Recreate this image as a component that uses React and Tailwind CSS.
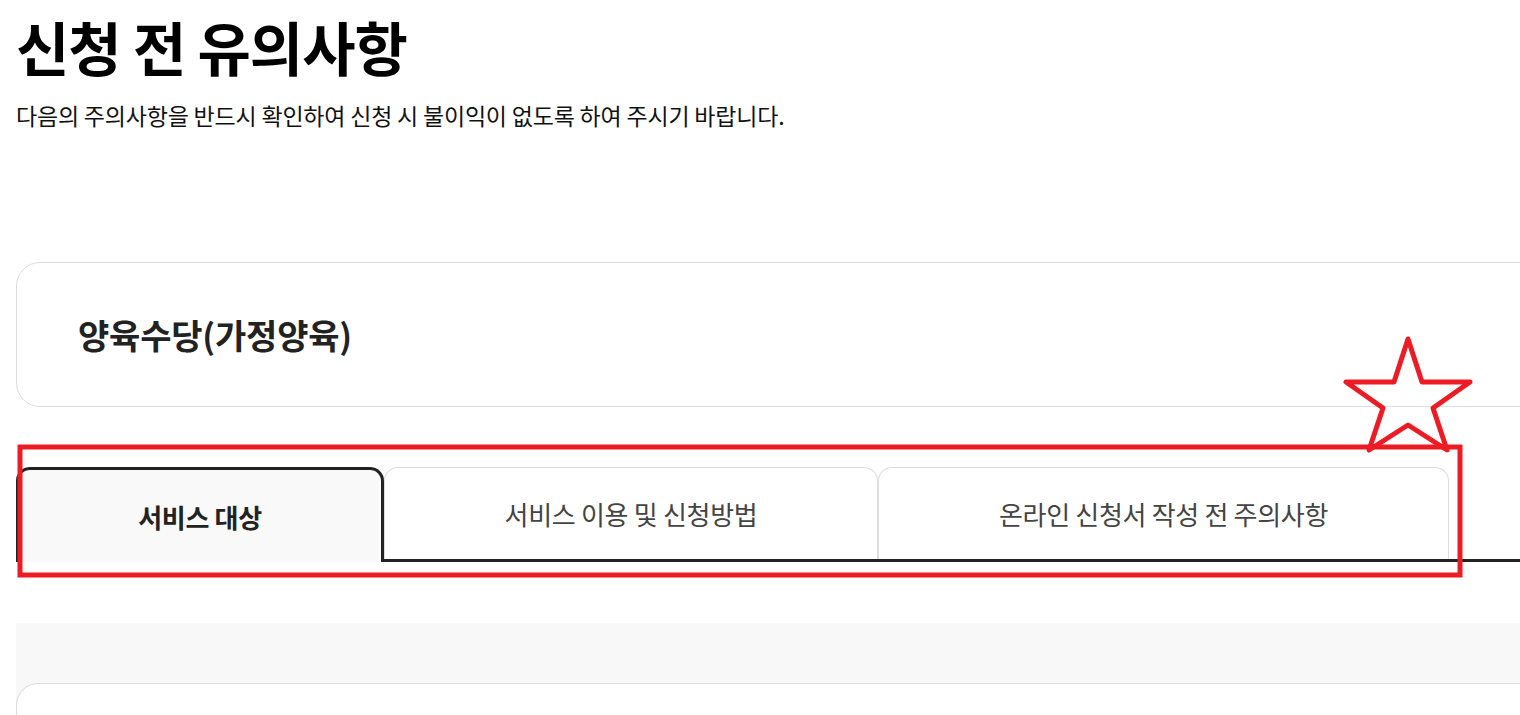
import React from 'react';

const tabs = [
  { label: '서비스 대상', width: 'w-[368px]', active: true },
  { label: '서비스 이용 및 신청방법', width: 'w-[494px]' },
  { label: '온라인 신청서 작성 전 주의사항', width: 'w-[571px]' },
];

function Tab({ label, width, active }) {
  if (active) {
    return (
      <button
        type="button"
        className={`${width} h-[95px] -mb-[3px] shrink-0 rounded-t-[14px] border-[3px] border-b-0 border-[#222] bg-[#f9f9f9] text-[26px] font-bold tracking-[-0.3px] text-[#222]`}
      >
        {label}
      </button>
    );
  }
  return (
    <button
      type="button"
      className={`${width} h-[92px] shrink-0 rounded-t-[14px] border border-b-0 border-[#dddddd] bg-white text-[26px] tracking-[-0.3px] text-[#444]`}
    >
      {label}
    </button>
  );
}

export default function App() {
  return (
    <div
      className="relative min-h-screen overflow-hidden bg-white text-[#111]"
      style={{ fontFamily: '"Noto Sans CJK KR", "Noto Sans", sans-serif' }}
    >
      <div className="w-[1640px] pl-[16px]">
        <h1 className="pt-[10px] text-[58px] font-bold leading-[72px] tracking-[-1px] text-black">
          신청 전 유의사항
        </h1>
        <p className="mt-[17px] text-[23px] leading-[32px] tracking-[-0.2px] text-[#111]">
          다음의 주의사항을 반드시 확인하여 신청 시 불이익이 없도록 하여 주시기 바랍니다.
        </p>

        <section className="mt-[131px] flex h-[145px] items-center rounded-[24px] border border-[#dddddd] pl-[61px]">
          <h2 className="text-[34px] font-bold tracking-[-0.2px] text-[#222]">양육수당(가정양육)</h2>
        </section>

        <div className="mt-[60px] flex border-b-[3px] border-[#222]">
          {tabs.map((tab) => (
            <Tab key={tab.label} {...tab} />
          ))}
        </div>

        <div className="mt-[61px] bg-[#f8f8f8] pt-[60px]">
          <div className="h-[200px] rounded-t-[22px] border border-b-0 border-[#dddddd] bg-white" />
        </div>
      </div>

      {/* red annotation marks */}
      <svg className="pointer-events-none absolute left-0 top-0" width="1520" height="715" viewBox="0 0 1520 715" fill="none">
        <rect x="20" y="447" width="1440" height="128" stroke="#ed1c24" strokeWidth="5" />
        <polygon
          points="1408,339 1422,382 1470,382 1433,408 1447,450 1408,425 1369,450 1383,408 1346,382 1394,382"
          stroke="#ed1c24"
          strokeWidth="5"
          strokeLinejoin="round"
        />
      </svg>
    </div>
  );
}
